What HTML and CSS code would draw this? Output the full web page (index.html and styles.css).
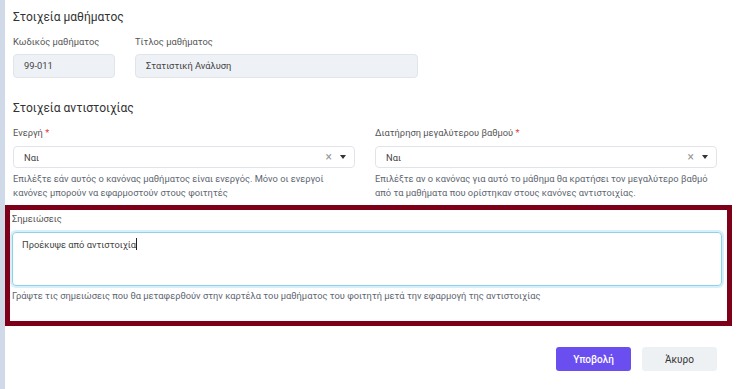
FILE: index.html
```
<!DOCTYPE html>
<html lang="el">
<head>
    <meta charset="UTF-8">
    <meta name="viewport" content="width=device-width, initial-scale=1.0">
    <title>Αντιστοιχία μαθήματος</title>
    <link rel="stylesheet" href="styles.css">
</head>
<body>
  <div class="page">

    <h2 class="section-title">Στοιχεία μαθήματος</h2>
    <div class="row">
      <div class="field field-code">
        <label class="label">Κωδικός μαθήματος</label>
        <div class="input readonly">99-011</div>
      </div>
      <div class="field field-title">
        <label class="label">Τίτλος μαθήματος</label>
        <div class="input readonly">Στατιστική Ανάλυση</div>
      </div>
    </div>

    <h2 class="section-title second">Στοιχεία αντιστοιχίας</h2>
    <div class="row cols">
      <div class="field half">
        <label class="label">Ενεργή <span class="req">*</span></label>
        <div class="select">
          <span class="value">Ναι</span>
          <span class="clear">×</span>
          <span class="caret"></span>
        </div>
        <p class="help">Επιλέξτε εάν αυτός ο κανόνας μαθήματος είναι ενεργός. Μόνο οι ενεργοί κανόνες μπορούν να εφαρμοστούν στους φοιτητές</p>
      </div>
      <div class="field half">
        <label class="label">Διατήρηση μεγαλύτερου βαθμού <span class="req">*</span></label>
        <div class="select">
          <span class="value">Ναι</span>
          <span class="clear">×</span>
          <span class="caret"></span>
        </div>
        <p class="help">Επιλέξτε αν ο κανόνας για αυτό το μάθημα θα κρατήσει τον μεγαλύτερο βαθμό από τα μαθήματα που ορίστηκαν στους κανόνες αντιστοιχίας.</p>
      </div>
    </div>

    <div class="notes">
      <label class="label">Σημειώσεις</label>
      <div class="textarea">Προέκυψε από αντιστοιχία<span class="cursor"></span></div>
      <p class="help">Γράψτε τις σημειώσεις που θα μεταφερθούν στην καρτέλα του μαθήματος του φοιτητή μετά την εφαρμογή της αντιστοιχίας</p>
    </div>

    <div class="actions">
      <button class="btn btn-primary">Υποβολή</button>
      <button class="btn btn-light">Άκυρο</button>
    </div>

  </div>
</body>
</html>
```

FILE: styles.css
```
* {
  box-sizing: border-box;
}

body {
  margin: 0;
  font-family: Roboto, "Noto Sans", sans-serif;
  color: #333;
  background: #fff;
}

.page {
  min-height: 100vh;
  border-left: 5px solid #d0d9e8;
  padding: 9px 21px 0 8px;
}

.section-title {
  margin: 0;
  font-size: 12px;
  line-height: 16px;
  font-weight: 400;
  color: #333;
}

.section-title.second {
  margin-top: 22px;
}

.row {
  display: flex;
  gap: 20px;
  margin-top: 10px;
}

.field-code {
  width: 102px;
}

.field-title {
  width: 283px;
}

.half {
  flex: 1;
}

.label {
  display: block;
  font-size: 9.3px;
  line-height: 14px;
  color: #555;
}

.req {
  color: #e5393a;
}

.input {
  margin-top: 5px;
  height: 24px;
  padding: 0 10px;
  border: 1px solid #e1e5eb;
  border-radius: 4px;
  font-size: 9.3px;
  line-height: 22px;
  color: #444;
}

.readonly {
  background: #eef1f5;
}

.select {
  display: flex;
  align-items: center;
  margin-top: 6px;
  height: 22px;
  padding: 0 8px 0 10px;
  border: 1px solid #e1e5eb;
  border-radius: 4px;
  font-size: 9.3px;
  color: #444;
}

.select .value {
  flex: 1;
}

.select .clear {
  color: #999;
  font-size: 12px;
  margin-right: 8px;
}

.select .caret {
  width: 0;
  height: 0;
  border-left: 3.5px solid transparent;
  border-right: 3.5px solid transparent;
  border-top: 4px solid #333;
}

.help {
  margin: 4px 0 0;
  font-size: 9.3px;
  line-height: 14px;
  color: #5e6670;
}

.notes {
  margin: 5px -15px 0 -8px;
  border: 5px solid #7d0018;
  padding: 2px 5px 18px 2px;
}

.textarea {
  margin-top: 6px;
  height: 54px;
  padding: 5px 9px;
  border: 1px solid #8fd0ea;
  border-radius: 4px;
  box-shadow: 0 0 0 2px #d6eff9;
  font-size: 9.3px;
  line-height: 14px;
  color: #444;
}

.cursor {
  display: inline-block;
  width: 1px;
  height: 12px;
  background: #222;
  vertical-align: -2px;
}

.notes .help {
  margin-top: 3px;
}

.actions {
  display: flex;
  justify-content: flex-end;
  gap: 11px;
  margin-top: 21px;
}

.btn {
  width: 75px;
  height: 24px;
  border: none;
  border-radius: 3px;
  font-family: Roboto, "Noto Sans", sans-serif;
  font-size: 10px;
  cursor: pointer;
}

.btn-primary {
  background: #6a4ef0;
  color: #fff;
  font-weight: 500;
}

.btn-light {
  background: #eef1f4;
  color: #333;
}
```
